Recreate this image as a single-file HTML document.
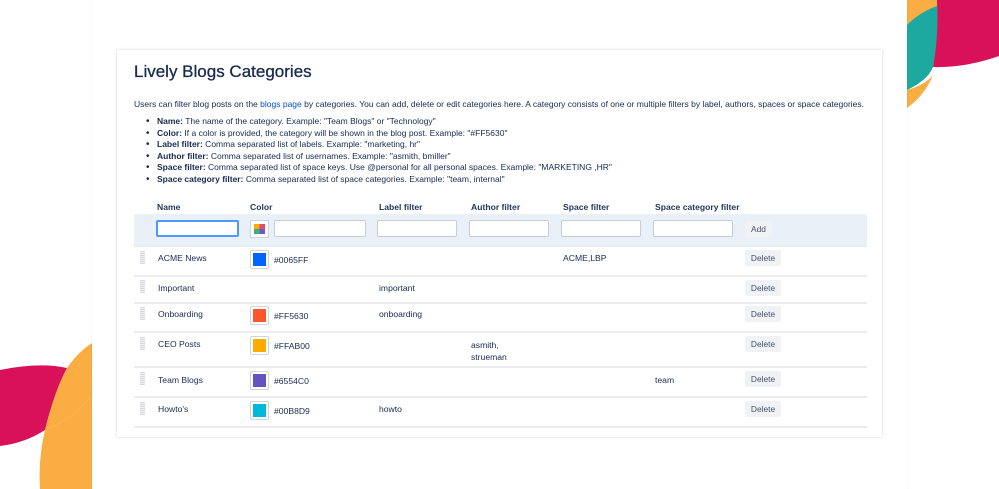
<!DOCTYPE html>
<html><head><meta charset="utf-8">
<style>
*{margin:0;padding:0;box-sizing:border-box}
body{width:999px;height:489px;background:#fff;position:relative;overflow:hidden;font-family:"Liberation Sans",sans-serif;color:#172b4d}
.a{position:absolute;white-space:nowrap}
.panel{position:absolute;left:92px;top:0;width:815px;height:489px;background:#fff;box-shadow:0 0 3px rgba(0,0,0,.06)}
.card{position:absolute;left:117px;top:50px;width:765px;height:387px;background:#fff;box-shadow:0 0 3px rgba(0,0,0,.18)}
.t{font-size:8.6px;color:#172b4d}
.h{font-size:8.6px;font-weight:bold;color:#253858}
.inp{position:absolute;height:17px;background:#fff;border:1px solid #c6cdd6;border-radius:2px;top:220px}
.btn{position:absolute;background:#f0f2f5;border-radius:2px;font-size:8.4px;color:#42526e;text-align:center;line-height:16px;height:16px}
.sw{position:absolute;width:19px;height:19px;border:1px solid #d0d5dc;border-radius:2px;padding:2px}
.sw div{width:100%;height:100%}
.sep{position:absolute;left:134px;width:733px;height:2px;background:#ebecf0}
.hd{position:absolute;left:140px;width:5px;height:13px;background:repeating-linear-gradient(#d6d8dc 0 1px,#f0f1f3 1px 2px)}
ul{list-style:none}
li{position:relative;padding-left:11px}
li:before{content:"•";position:absolute;left:0;top:0;font-size:10px}
</style></head><body>
<svg class="a" style="left:0;top:0" width="999" height="489">
<path d="M907 0 L937 0 L937 10 Q920 15 907 25 Z" fill="#f9ad42"/>
<path d="M937 0 L999 0 L999 56 Q965 68 933 67 Q938 35 937 0 Z" fill="#d81159"/>
<path d="M937 0 Q939 35 933 67 Q928 80 907 90 L907 25 Q920 12 937 6 Z" fill="#1ea9a0"/>
<path d="M907 90 Q925 85 933 75 Q925 95 907 108 Z" fill="#f9ad42"/>
<path d="M0 370 Q40 362 67 368 Q55 390 45 430 Q25 443 0 446 Z" fill="#d81159"/>
<path d="M67 368 Q78 352 92 343 L92 395 Q75 418 45 430 Q55 390 67 368 Z" fill="#f9ad42"/>
<path d="M92 395 L92 489 L40 489 Q38 460 45 430 Q75 418 92 395 Z" fill="#f9ad42"/>
</svg>
<div class="panel"></div>
<div class="card"></div>
<div class="a" style="left:134px;top:62px;font-size:17px;color:#172b4d;-webkit-text-stroke:0.3px #172b4d">Lively Blogs Categories</div>
<div class="a t" style="left:134px;top:99px;font-size:8.5px">Users can filter blog posts on the <span style="color:#0052cc">blogs page</span> by categories. You can add, delete or edit categories here. A category consists of one or multiple filters by label, authors, spaces or space categories.</div>
<ul class="a t" style="left:146px;top:116px;line-height:11.6px;font-size:8.5px">
<li><b>Name:</b> The name of the category. Example: "Team Blogs" or "Technology"</li>
<li><b>Color:</b> If a color is provided, the category will be shown in the blog post. Example: "#FF5630"</li>
<li><b>Label filter:</b> Comma separated list of labels. Example: "marketing, hr"</li>
<li><b>Author filter:</b> Comma separated list of usernames. Example: "asmith, bmiller"</li>
<li><b>Space filter:</b> Comma separated list of space keys. Use @personal for all personal spaces. Example: "MARKETING ,HR"</li>
<li><b>Space category filter:</b> Comma separated list of space categories. Example: "team, internal"</li>
</ul>
<div class="a h" style="left:157px;top:202px">Name</div>
<div class="a h" style="left:250px;top:202px">Color</div>
<div class="a h" style="left:379px;top:202px">Label filter</div>
<div class="a h" style="left:471px;top:202px">Author filter</div>
<div class="a h" style="left:563px;top:202px">Space filter</div>
<div class="a h" style="left:655px;top:202px">Space category filter</div>
<div class="a" style="left:134px;top:214px;width:733px;height:31px;background:#e9f0f8"></div>
<div class="inp" style="left:156px;width:83px;border:2px solid #4c9aff"></div>
<div class="a" style="left:250px;top:220px;width:19px;height:18px;border:1px solid #d0d5dc;background:#fff;padding:3px">
<div style="width:100%;height:100%;background:conic-gradient(#e94a6a 0 25%,#6a5acd 25% 50%,#36b37e 50% 75%,#ffab00 75%)"></div></div>
<div class="inp" style="left:274px;width:92px"></div>
<div class="inp" style="left:377px;width:80px"></div>
<div class="inp" style="left:469px;width:80px"></div>
<div class="inp" style="left:561px;width:80px"></div>
<div class="inp" style="left:653px;width:80px"></div>
<div class="btn" style="left:745px;top:221px;width:27px">Add</div>
<div class="sep" style="top:245px"></div>
<div class="sep" style="top:275px"></div>
<div class="sep" style="top:302px"></div>
<div class="sep" style="top:331px"></div>
<div class="sep" style="top:366px"></div>
<div class="sep" style="top:396px"></div>
<div class="sep" style="top:426px"></div>

<div class="hd" style="top:251px"></div>
<div class="a t" style="left:158px;top:253px">ACME News</div>
<div class="sw" style="left:250px;top:250px"><div style="background:#0065ff"></div></div>
<div class="a t" style="left:274px;top:255px">#0065FF</div>
<div class="a t" style="left:563px;top:253px">ACME,LBP</div>
<div class="btn" style="left:745px;top:250px;width:36px">Delete</div>

<div class="hd" style="top:280px"></div>
<div class="a t" style="left:158px;top:283px">Important</div>
<div class="a t" style="left:379px;top:283px">important</div>
<div class="btn" style="left:745px;top:280px;width:36px">Delete</div>

<div class="hd" style="top:307px"></div>
<div class="a t" style="left:158px;top:309px">Onboarding</div>
<div class="sw" style="left:250px;top:306px"><div style="background:#ff5630"></div></div>
<div class="a t" style="left:274px;top:311px">#FF5630</div>
<div class="a t" style="left:379px;top:309px">onboarding</div>
<div class="btn" style="left:745px;top:306px;width:36px">Delete</div>

<div class="hd" style="top:337px"></div>
<div class="a t" style="left:158px;top:339px">CEO Posts</div>
<div class="sw" style="left:250px;top:336px"><div style="background:#ffab00"></div></div>
<div class="a t" style="left:274px;top:341px">#FFAB00</div>
<div class="a t" style="left:471px;top:339px;line-height:12px">asmith,<br>strueman</div>
<div class="btn" style="left:745px;top:336px;width:36px">Delete</div>

<div class="hd" style="top:372px"></div>
<div class="a t" style="left:158px;top:375px">Team Blogs</div>
<div class="sw" style="left:250px;top:371px"><div style="background:#6554c0"></div></div>
<div class="a t" style="left:274px;top:376px">#6554C0</div>
<div class="a t" style="left:655px;top:375px">team</div>
<div class="btn" style="left:745px;top:371px;width:36px">Delete</div>

<div class="hd" style="top:402px"></div>
<div class="a t" style="left:158px;top:404px">Howto's</div>
<div class="sw" style="left:250px;top:401px"><div style="background:#00b8d9"></div></div>
<div class="a t" style="left:274px;top:406px">#00B8D9</div>
<div class="a t" style="left:379px;top:404px">howto</div>
<div class="btn" style="left:745px;top:401px;width:36px">Delete</div>
</body></html>
